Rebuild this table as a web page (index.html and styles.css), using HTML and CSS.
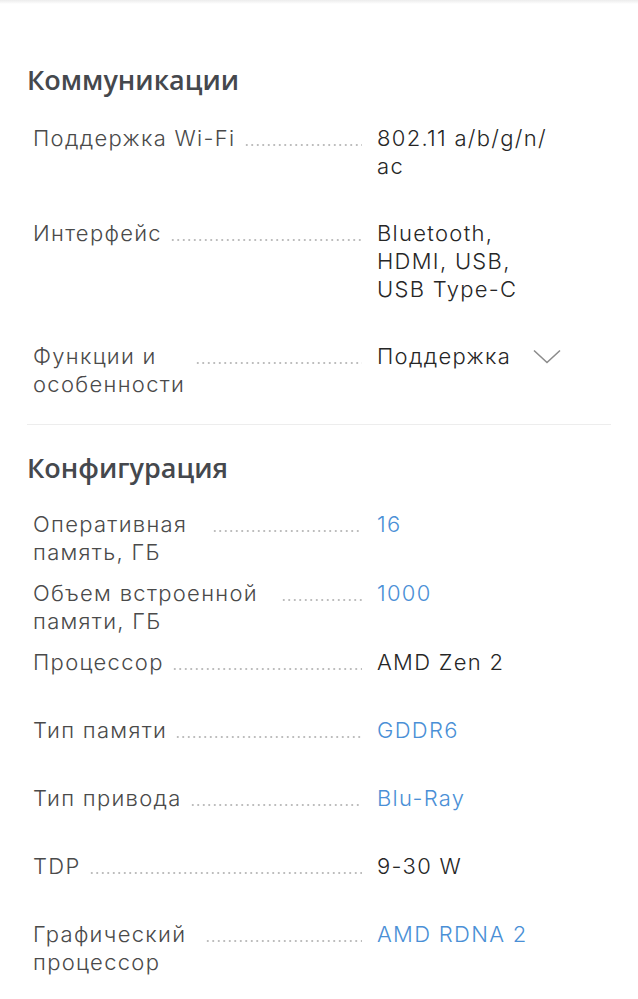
FILE: index.html
```html
<!DOCTYPE html>
<html lang="ru">
<head>
<meta charset="utf-8">
<title>Характеристики</title>
<link rel="stylesheet" href="styles.css">
</head>
<body>
<div class="topbar"></div>
<main class="specs">
  <section class="group group-comm">
    <h2 class="group-title">Коммуникации</h2>
    <div class="rows rows-comm">
      <div class="row">
        <div class="name"><span class="label">Поддержка Wi-Fi</span><span class="dots"></span></div>
        <div class="value">802.11 a/b/g/n/<wbr>ac</div>
      </div>
      <div class="row">
        <div class="name"><span class="label">Интерфейс</span><span class="dots"></span></div>
        <div class="value">Bluetooth, HDMI, USB, USB Type-C</div>
      </div>
      <div class="row">
        <div class="name"><span class="label label-w154">Функции и особенности</span><span class="dots"></span></div>
        <div class="value value-toggle"><span>Поддержка</span>
          <svg class="chevron" width="28" height="15" viewBox="0 0 28 15" aria-hidden="true"><polyline points="1,1.5 14,13.5 27,1.5" fill="none" stroke="#8c8c8c" stroke-width="1.6"/></svg>
        </div>
      </div>
    </div>
  </section>
  <hr class="divider">
  <section class="group group-conf">
    <h2 class="group-title">Конфигурация</h2>
    <div class="rows rows-conf">
      <div class="row">
        <div class="name"><span class="label label-w171">Оперативная память, ГБ</span><span class="dots"></span></div>
        <div class="value"><a class="link" href="#">16</a></div>
      </div>
      <div class="row">
        <div class="name"><span class="label label-w240">Объем встроенной памяти, ГБ</span><span class="dots"></span></div>
        <div class="value"><a class="link" href="#">1000</a></div>
      </div>
      <div class="row">
        <div class="name"><span class="label">Процессор</span><span class="dots"></span></div>
        <div class="value">AMD Zen 2</div>
      </div>
      <div class="row">
        <div class="name"><span class="label">Тип памяти</span><span class="dots"></span></div>
        <div class="value"><a class="link" href="#">GDDR6</a></div>
      </div>
      <div class="row">
        <div class="name"><span class="label">Тип привода</span><span class="dots"></span></div>
        <div class="value"><a class="link" href="#">Blu-Ray</a></div>
      </div>
      <div class="row">
        <div class="name"><span class="label">TDP</span><span class="dots"></span></div>
        <div class="value">9-30 W</div>
      </div>
      <div class="row">
        <div class="name"><span class="label label-w164">Графический процессор</span><span class="dots"></span></div>
        <div class="value"><a class="link" href="#">AMD RDNA 2</a></div>
      </div>
    </div>
  </section>
</main>
</body>
</html>
```
FILE: styles.css
```css
* { box-sizing: border-box; }
html, body { margin: 0; padding: 0; background: #fff; }
body {
  font-family: "Inter", "Noto Sans", "Liberation Sans", sans-serif;
  color: #333;
}
.topbar {
  height: 4px;
  background: linear-gradient(#ececec, #f7f7f7 60%, #fff);
}
.specs {
  padding: 60px 27px 0 27px;
}
.group-title {
  margin: 0;
  font-family: "Open Sans", "Noto Sans", sans-serif;
  font-weight: 600;
  font-size: 27px;
  line-height: 32px;
  color: #45484d;
}
.rows {
  display: flex;
  flex-direction: column;
  padding-left: 6px;
}
.rows-comm { margin-top: 28px; gap: 39px; }
.rows-conf { margin-top: 26px; gap: 13px; }
.rows-conf .row { min-height: 55px; }
.row {
  display: grid;
  grid-template-columns: 329px 175px;
  column-gap: 15px;
  font-size: 22px;
  line-height: 28px;
  font-weight: 300;
  letter-spacing: 1.3px;
}
.name {
  display: flex;
  align-items: flex-start;
  gap: 8px;
}
.label {
  color: #4a4a4a;
  flex: 0 0 auto;
}
.label-w154 { width: 154px; }
.label-w171 { width: 171px; }
.label-w240 { width: 240px; }
.label-w164 { width: 164px; }
.dots {
  flex: 1 1 auto;
  height: 28px;
  background-image: radial-gradient(circle, #bdbdbd 0.9px, rgba(255,255,255,0) 1.4px);
  background-size: 5.5px 4px;
  background-repeat: repeat-x;
  background-position: left 0 top 19px;
}
.value {
  color: #262626;
}
.value-toggle {
  display: flex;
  align-items: flex-start;
  gap: 22px;
  white-space: nowrap;
}
.chevron { margin-top: 7px; flex: 0 0 auto; }
.link {
  color: #4a8fd6;
  text-decoration: none;
}
.divider {
  margin: 26px 0 27px 0;
  border: 0;
  border-top: 1px solid #ededed;
  height: 0;
}
```
